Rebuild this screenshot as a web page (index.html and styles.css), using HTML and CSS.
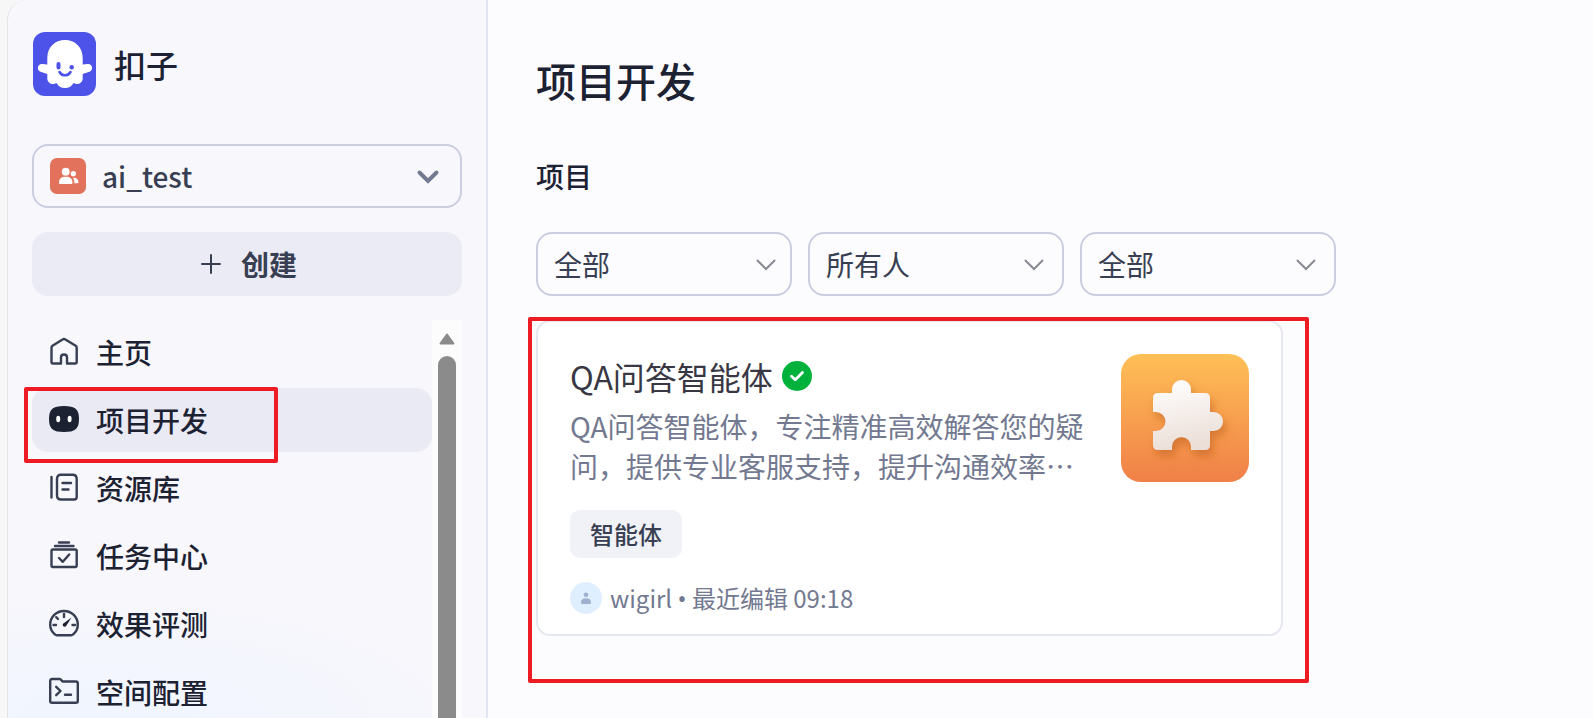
FILE: index.html
```html
<!DOCTYPE html>
<html lang="zh-CN">
<head>
<meta charset="utf-8">
<meta name="viewport" content="width=device-width, initial-scale=1.0">
<title>项目开发 - 扣子</title>
<link rel="stylesheet" href="styles.css">
</head>
<body>
<div class="app">

  <aside class="sidebar">
    <a class="brand" href="#">
      <svg class="brand-logo" viewBox="0 0 64 64" aria-hidden="true">
        <rect x="1" width="63" height="64" rx="12" fill="#4d53e8"/>
        <path fill="#fff" d="M15.300 26C15.300 15 23 8 33 8S50.700 15 50.700 26V32.500L55.500 32C61 31.500 61.500 38.500 57.500 39.700L50.700 42V46.500C50.700 51.500 45 53.500 41.500 51C40 54 37 56 33 56S26 54 24.500 51C21 53.500 15.300 51.500 15.300 46.500V42L8.500 39.700C4.500 38.500 5 31.500 10.500 32L15.300 32.500Z"/>
        <rect x="24.500" y="30" width="4" height="7.600" rx="2" fill="#4d53e8"/>
        <circle cx="39.700" cy="35.200" r="2.200" fill="#4d53e8"/>
        <path d="M27.500 40C30 44.300 36 44.300 38.500 40" fill="none" stroke="#4d53e8" stroke-width="2.600" stroke-linecap="round"/>
      </svg>
      <span>扣子</span>
    </a>

    <div class="space">
      <svg class="space-icon" viewBox="0 0 36 36" aria-hidden="true">
        <rect width="36" height="36" rx="7" fill="#e2725b"/>
        <g fill="#fff">
          <circle cx="15.700" cy="13.700" r="3.900"/>
          <circle cx="23.300" cy="15.700" r="2.600"/>
          <path d="M9 24.500C9 20.500 11.500 18.700 15.700 18.700S22.500 20.500 22.500 24.500C22.500 25.500 22 26 21 26H10.500C9.500 26 9 25.500 9 24.500Z"/>
          <path d="M23 19.700C26.500 19.500 28.500 21.500 28.500 24.300C28.500 25 28 25.300 27.300 25.300H24.300C24.500 23 24 21.200 23 19.700Z"/>
        </g>
      </svg>
      <select class="space-select" aria-label="工作空间">
        <option>ai_test</option>
      </select>
      <svg class="space-arrow" viewBox="0 0 24 24" aria-hidden="true"><path d="M3.500 8.500L12 17L20.500 8.500"/></svg>
    </div>

    <button class="create" type="button">
      <svg viewBox="0 0 20 20" aria-hidden="true"><path d="M10 1V19M1 10H19"/></svg>
      <span>创建</span>
    </button>

    <div class="menu">
      <nav class="nav">
        <a class="nav-item" href="#">
          <svg viewBox="0 0 32 32" aria-hidden="true"><path d="M3.500 12C3.500 11 3.800 10.300 4.500 9.800L14.600 3.500C15.500 2.900 16.500 2.900 17.400 3.500L27.700 9.800C28.400 10.300 28.700 11 28.700 12V26C28.700 27 28.200 27.500 27.200 27.500H19V21.500C19 19.500 18 18.500 16 18.500S13 19.500 13 21.500V27.500H5C4 27.500 3.500 27 3.500 26Z"/></svg>
          <span>主页</span>
        </a>
        <a class="nav-item active" href="#" aria-current="page">
          <svg viewBox="0 0 32 32" aria-hidden="true">
            <path class="solid" d="M16 2C27 2 31 5 31 15S27 28 16 28S1 25 1 15S5 2 16 2Z"/>
            <ellipse class="eye" cx="10.200" cy="15" rx="2" ry="3.300"/>
            <ellipse class="eye" cx="21.600" cy="15" rx="2" ry="3.300"/>
          </svg>
          <span>项目开发</span>
        </a>
        <a class="nav-item" href="#">
          <svg viewBox="0 0 32 32" aria-hidden="true"><path d="M3.500 5V25.500M13 2.800H24.500C27.300 2.800 28.700 4.300 28.700 7V25C28.700 26.800 28 27.500 26.200 27.500H13C10.300 27.500 9 26.300 9 23.500V7C9 4.200 10.300 2.800 13 2.800ZM14.500 11H23M14.500 17.500H20.500"/></svg>
          <span>资源库</span>
        </a>
        <a class="nav-item" href="#">
          <svg viewBox="0 0 32 32" aria-hidden="true"><path d="M11 2.500H21M7 6H25.500M5 9.500H27.200C28.200 9.500 28.700 10 28.700 11V25.500C28.700 26.500 28.200 27 27.200 27H5C4 27 3.500 26.500 3.500 25.500V11C3.500 10 4 9.500 5 9.500ZM11 18L14.800 21.800L21.200 14.500"/></svg>
          <span>任务中心</span>
        </a>
        <a class="nav-item" href="#">
          <svg viewBox="0 0 32 32" aria-hidden="true">
            <path d="M9 27.200C8 27.200 7.500 27 7 26.500C4 24 2.200 21 2.200 16.800C2.200 9 8.300 3 16 3S29.800 9 29.800 16.800C29.800 21 28 24 25 26.500C24.500 27 24 27.200 23 27.200ZM16 6V9M5.500 17H8M24.500 17H27M8.200 9.200L10 11"/>
            <path class="solid" d="M23.500 9.500L18.300 17.700C17 20 13.500 18 15 15.700Z"/>
          </svg>
          <span>效果评测</span>
        </a>
        <a class="nav-item" href="#">
          <svg viewBox="0 0 32 32" aria-hidden="true"><path d="M4 3H11.500C12.500 3 13 3.500 13.500 4.200L14.500 5.500H28C29.200 5.500 29.800 6.200 29.800 7.300V25C29.800 26.200 29.200 26.800 28 26.800H4C2.800 26.800 2.200 26.200 2.200 25V5C2.200 3.700 2.800 3 4 3ZM8.200 10.800L12.500 15L8.200 19.200M17 18.800H23"/></svg>
          <span>空间配置</span>
        </a>
      </nav>
      <div class="scrollbar" aria-hidden="true">
        <svg viewBox="0 0 16 12"><path d="M8 1.500L14.500 10.500H1.500Z"/></svg>
        <div class="thumb"></div>
      </div>
      <div class="mark mark-nav"></div>
    </div>
  </aside>

  <main class="main">
    <h1>项目开发</h1>
    <h2>项目</h2>

    <div class="filters">
      <div class="filter filter-type">
        <select aria-label="类型"><option>全部</option></select>
        <svg viewBox="0 0 20 20" aria-hidden="true"><path d="M1.500 6.500L10 15L18.500 6.500"/></svg>
      </div>
      <div class="filter">
        <select aria-label="创建者"><option>所有人</option></select>
        <svg viewBox="0 0 20 20" aria-hidden="true"><path d="M1.500 6.500L10 15L18.500 6.500"/></svg>
      </div>
      <div class="filter">
        <select aria-label="状态"><option>全部</option></select>
        <svg viewBox="0 0 20 20" aria-hidden="true"><path d="M1.500 6.500L10 15L18.500 6.500"/></svg>
      </div>
    </div>

    <div class="projects">
      <article class="card">
        <div class="card-top">
          <div class="card-text">
            <h3 class="card-title">
              <span>QA问答智能体</span>
              <svg viewBox="0 0 30 30" aria-hidden="true"><circle cx="15" cy="15" r="15" fill="#00b23c"/><path d="M9.500 15.200L13.300 18.800L20.500 11.500" fill="none" stroke="#fff" stroke-width="2.800" stroke-linecap="round" stroke-linejoin="round"/></svg>
            </h3>
            <p class="card-desc">QA问答智能体，专注精准高效解答您的疑问，提供专业客服支持，提升沟通效率…</p>
          </div>
          <svg class="card-image" viewBox="0 0 128 128" aria-hidden="true">
            <defs>
              <linearGradient id="orange" x1="0" y1="0" x2="0" y2="1">
                <stop offset="0" stop-color="#ffc056"/>
                <stop offset="1" stop-color="#f08048"/>
              </linearGradient>
              <linearGradient id="piece" x1="0" y1="0" x2="0.200" y2="1">
                <stop offset="0" stop-color="#fff"/>
                <stop offset="1" stop-color="#ecdfd8"/>
              </linearGradient>
              <filter id="shadow" x="-30%" y="-30%" width="170%" height="170%">
                <feDropShadow dx="3" dy="6" stdDeviation="4" flood-color="#b85a18" flood-opacity="0.500"/>
              </filter>
            </defs>
            <rect width="128" height="128" rx="20" fill="url(#orange)"/>
            <path filter="url(#shadow)" fill="url(#piece)" d="M37 39H51V35.500A9.500 9.500 0 0 1 70 35.500V39H84Q89 39 89 44V58H92.500A9.500 9.500 0 0 1 92.500 77H89V91Q89 96 84 96H70V92.500A9.500 9.500 0 0 0 51 92.500V96H37Q32 96 32 91V77H35A9.500 9.500 0 0 0 35 58H32V44Q32 39 37 39Z"/>
          </svg>
        </div>
        <div class="tag">智能体</div>
        <div class="card-foot">
          <svg viewBox="0 0 32 32" aria-hidden="true"><circle cx="16" cy="16" r="16" fill="#e0efff"/><g fill="#9eb1d0"><circle cx="16" cy="12.700" r="2.300"/><path d="M11 20.500C11 17.700 13 16.300 16 16.300S21 17.700 21 20.500C21 21.500 20.500 22 19.500 22H12.500C11.500 22 11 21.500 11 20.500Z"/></g></svg>
          <span>wigirl <span class="dot">•</span> 最近编辑 09:18</span>
        </div>
      </article>
      <div class="mark mark-card"></div>
    </div>
  </main>

</div>
</body>
</html>
```
FILE: styles.css
```css
* {
  box-sizing: border-box;
}
body {
  margin: 0;
  background-color: #f7f7f7;
  color: #1d2233;
  font-family: "Noto Sans CJK SC", sans-serif;
  font-size: 28px;
  line-height: 40px;
}
a {
  color: inherit;
  text-decoration: none;
}
button, select {
  font: inherit;
  color: #383f52;
}
h1, h2, h3, p {
  margin: 0;
  font-weight: 500;
}
.app {
  display: flex;
  height: 100vh;
  padding-left: 7px;
  overflow: hidden;
}

/* sidebar */
.sidebar {
  display: flex;
  flex-direction: column;
  flex: none;
  width: 481px;
  padding: 32px 24px 0;
  border-left: 1px solid #e3e4e8;
  border-right: 2px solid #e1e4ee;
  border-top-left-radius: 20px;
  background: radial-gradient(ellipse 360px 120px at 20% 100%, #f0f5ff, #f7f7fc);
}
.brand {
  display: flex;
  align-items: center;
  gap: 18px;
  font-size: 32px;
  font-weight: 500;
}
.brand-logo {
  width: 64px;
  height: 64px;
}
.space, .filter {
  display: grid;
  align-items: center;
}
.space {
  grid-template-columns: 54px 1fr 46px;
  margin-top: 48px;
}
.space-icon {
  grid-area: 1 / 1;
  width: 36px;
  margin-left: 18px;
  pointer-events: none;
}
.space-select, .filter select {
  height: 64px;
  border: 2px solid #cbcee0;
  border-radius: 16px;
  background: transparent;
  appearance: none;
}
.space-select {
  grid-area: 1 / 1 / 2 / 4;
  padding: 0 68px;
  font-weight: 500;
}
.space-arrow {
  grid-area: 1 / 3;
  width: 24px;
  stroke-width: 4;
}
.space-arrow, .filter svg {
  fill: none;
  stroke: #737990;
  stroke-linecap: round;
  pointer-events: none;
}
.create {
  display: flex;
  align-items: center;
  justify-content: center;
  gap: 20px;
  flex: none;
  height: 64px;
  margin-top: 24px;
  padding: 0 4px 0 8px;
  border: 0;
  border-radius: 16px;
  background-color: #ebebf5;
  font-weight: 700;
}
.create svg {
  width: 20px;
  fill: none;
  stroke: #383f52;
  stroke-width: 2;
  stroke-linecap: round;
}

/* menu */
.menu {
  position: relative;
  display: flex;
  flex: 1;
  min-height: 0;
  margin-top: 24px;
}
.nav {
  display: flex;
  flex-direction: column;
  flex: 1;
  gap: 4px;
}
.nav-item {
  display: flex;
  align-items: center;
  flex: none;
  gap: 16px;
  height: 64px;
  padding-left: 16px;
  border-radius: 16px;
  font-weight: 500;
}
.nav-item.active {
  background-color: #eaeaf5;
}
.nav-item svg {
  width: 32px;
  fill: none;
  stroke: #383f52;
  stroke-width: 2.4;
  stroke-linecap: round;
  stroke-linejoin: round;
}
.nav-item .solid {
  fill: #1d2233;
  stroke: none;
}
.nav-item .eye {
  fill: #fff;
  stroke: none;
}
.scrollbar {
  display: flex;
  flex-direction: column;
  align-items: center;
  gap: 11px;
  width: 30px;
  padding-top: 13px;
  background-color: #fcfcfc;
}
.scrollbar svg {
  width: 16px;
  height: 12px;
  fill: #8b8b8b;
  stroke: #8b8b8b;
  stroke-width: 2;
  stroke-linejoin: round;
}
.thumb {
  flex: 1;
  width: 18px;
  border-radius: 9px 9px 0 0;
  background-color: #8b8b8b;
}

/* red highlight boxes over the page */
.mark {
  position: absolute;
  border: 4px solid #ed1c24;
  border-radius: 2px;
  pointer-events: none;
}
.mark-nav {
  top: 67px;
  left: -8px;
  width: 254px;
  height: 76px;
}
.mark-card {
  top: -3px;
  right: -26px;
  bottom: -47px;
  left: -8px;
}

/* main */
.main {
  flex: 1;
  min-width: 0;
  padding: 50px 48px 0;
  background-color: #fcfcff;
}
h1 {
  font-size: 40px;
  line-height: 60px;
}
h2 {
  margin-top: 46px;
  font-size: 28px;
}
.filters {
  display: flex;
  gap: 16px;
  margin-top: 36px;
}
.filter {
  grid-template-columns: 1fr 48px;
  width: 256px;
}
.filter-type {
  grid-template-columns: 1fr 44px;
}
.filter select {
  grid-area: 1 / 1 / 2 / 3;
  padding: 0 48px 0 16px;
}
.filter svg {
  grid-area: 1 / 2;
  width: 20px;
  margin-left: 8px;
  stroke: #888a93;
  stroke-width: 2;
}
.projects {
  position: relative;
  width: 747px;
  max-width: 100%;
  margin-top: 24px;
}
.card {
  padding: 32px 32px 20px;
  border: 2px solid #e6e8f0;
  border-radius: 14px;
  background-color: #fff;
}
.card-top {
  display: flex;
  justify-content: space-between;
  gap: 32px;
}
.card-text {
  flex: 1;
}
.card-title {
  display: flex;
  align-items: center;
  gap: 9px;
  height: 44px;
  margin-bottom: 8px;
  font-size: 32px;
  font-weight: 400;
  color: #383743;
}
.card-title svg {
  width: 30px;
}
.card-desc {
  font-weight: 400;
  color: #737990;
}
.card-image {
  flex: none;
  width: 128px;
  height: 128px;
}
.tag {
  width: fit-content;
  margin-top: 24px;
  padding: 4px 20px;
  border-radius: 10px;
  background-color: #f1f2f8;
  font-size: 24px;
  font-weight: 500;
  color: #383f52;
}
.card-foot {
  display: flex;
  align-items: center;
  gap: 8px;
  height: 32px;
  margin-top: 24px;
  font-size: 24px;
  color: #737990;
}
.card-foot svg {
  width: 32px;
}
.dot {
  font-family: "Noto Sans", sans-serif;
}
```
